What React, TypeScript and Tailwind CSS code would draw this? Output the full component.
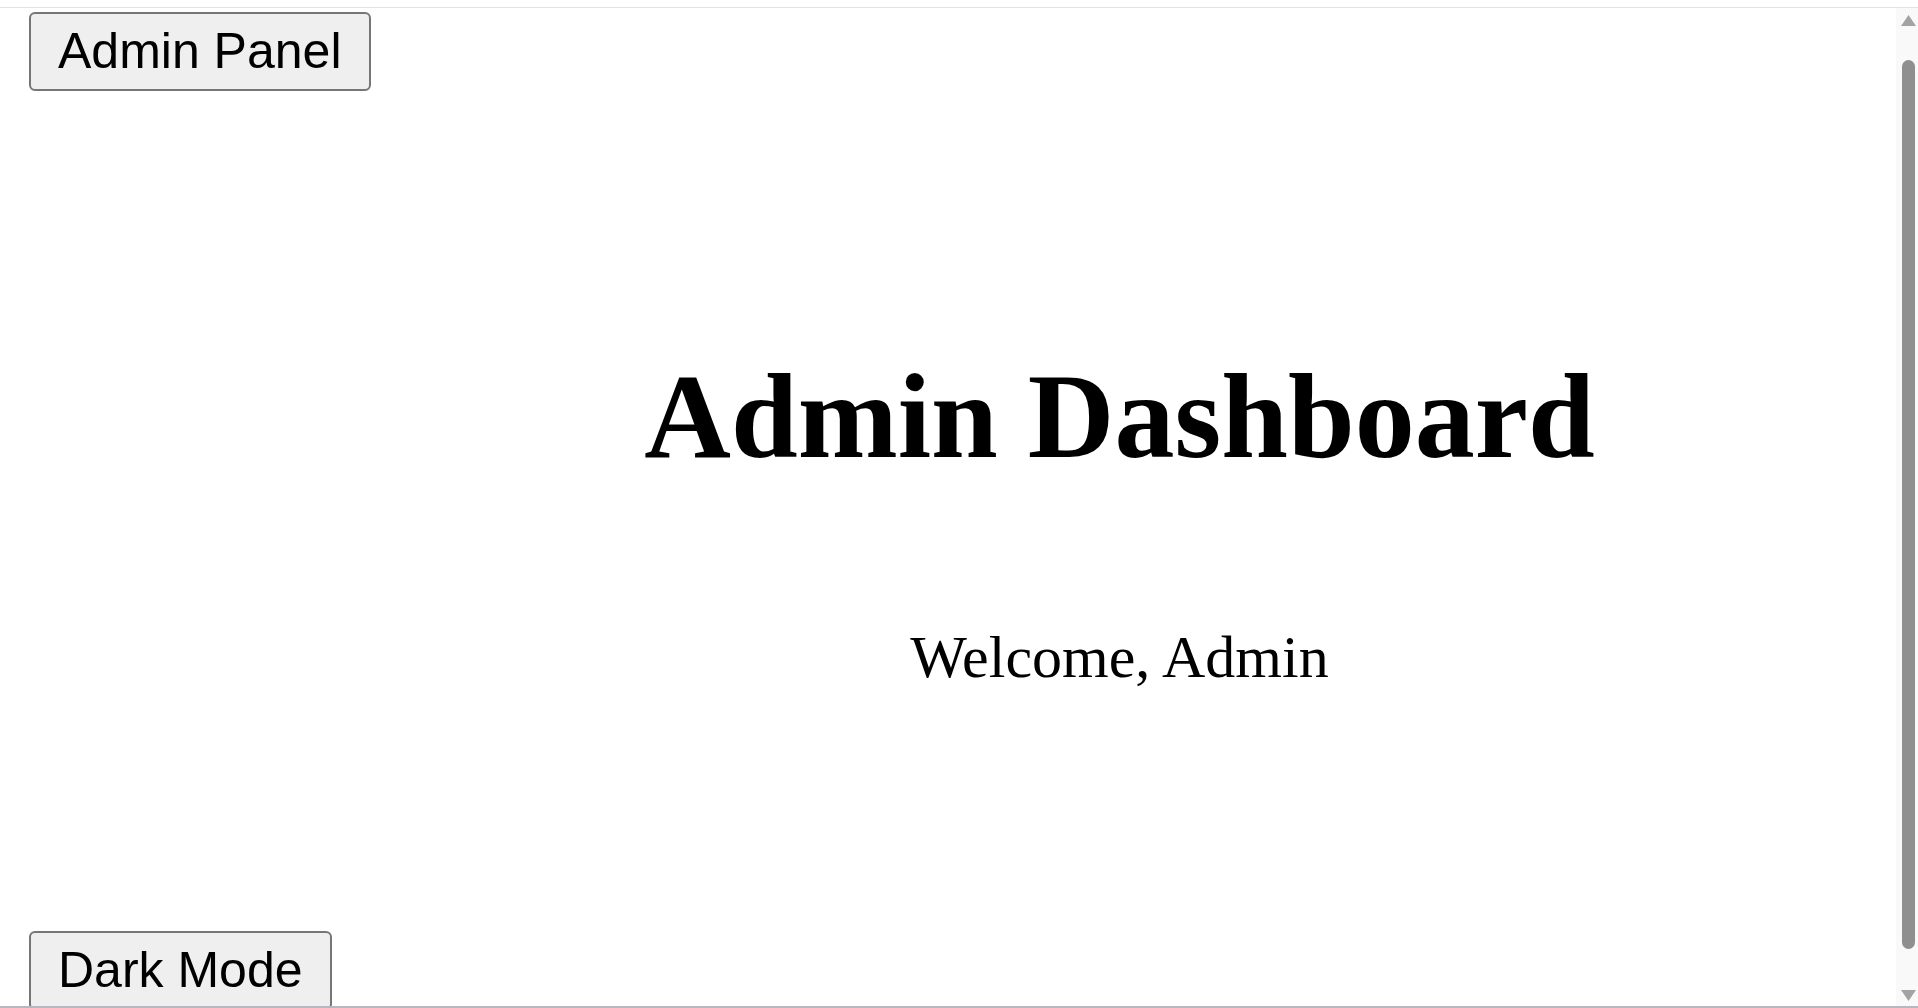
import React from "react";

function FakeScrollbar() {
  return (
    <div className="w-[22px] shrink-0 bg-[#f9f9f9] flex flex-col items-center relative">
      <svg width="15" height="11" viewBox="0 0 15 11" className="mt-[7px] ml-[2px]">
        <polygon points="7.5,0 15,11 0,11" fill="#a3a3a3" />
      </svg>
      <div className="mt-[34px] ml-[2px] w-[13px] h-[889px] rounded-full bg-[#8f8f8f]" />
      <svg width="15" height="11" viewBox="0 0 15 11" className="mt-[41px] ml-[2px]">
        <polygon points="0,0 15,0 7.5,11" fill="#a3a3a3" />
      </svg>
    </div>
  );
}

export default function App() {
  const btn =
    "bg-[#efefef] border-2 border-[#767676] rounded-[6px] px-[27px] py-[9px] text-[50px] leading-[57px] text-black whitespace-nowrap";
  return (
    <div
      className="w-full h-screen bg-white flex flex-col overflow-hidden"
      style={{ fontFamily: '"Liberation Sans", Arial, sans-serif' }}
    >
      <div className="h-[7px] shrink-0" />
      <div className="h-px shrink-0 bg-[#e3e3e3]" />
      <div className="flex flex-1 min-h-0">
        <div className="flex flex-1 min-w-0 overflow-hidden">
          <div className="w-[343px] shrink-0 flex flex-col items-start pl-[29px] pt-[4px]">
            <button className={btn}>Admin Panel</button>
            <button className={btn + " mt-[840px]"}>Dark Mode</button>
          </div>
          <div
            className="flex-1 flex flex-col items-center pt-[342px] text-black"
            style={{ fontFamily: '"Liberation Serif", "Times New Roman", serif' }}
          >
            <h1 className="text-[120px] leading-[133px] font-bold">Admin Dashboard</h1>
            <p className="mt-[141px] text-[60px] leading-[66px]">Welcome, Admin</p>
          </div>
        </div>
        <FakeScrollbar />
      </div>
      <div className="h-[2px] shrink-0 bg-[#b5b8bf]" />
    </div>
  );
}
